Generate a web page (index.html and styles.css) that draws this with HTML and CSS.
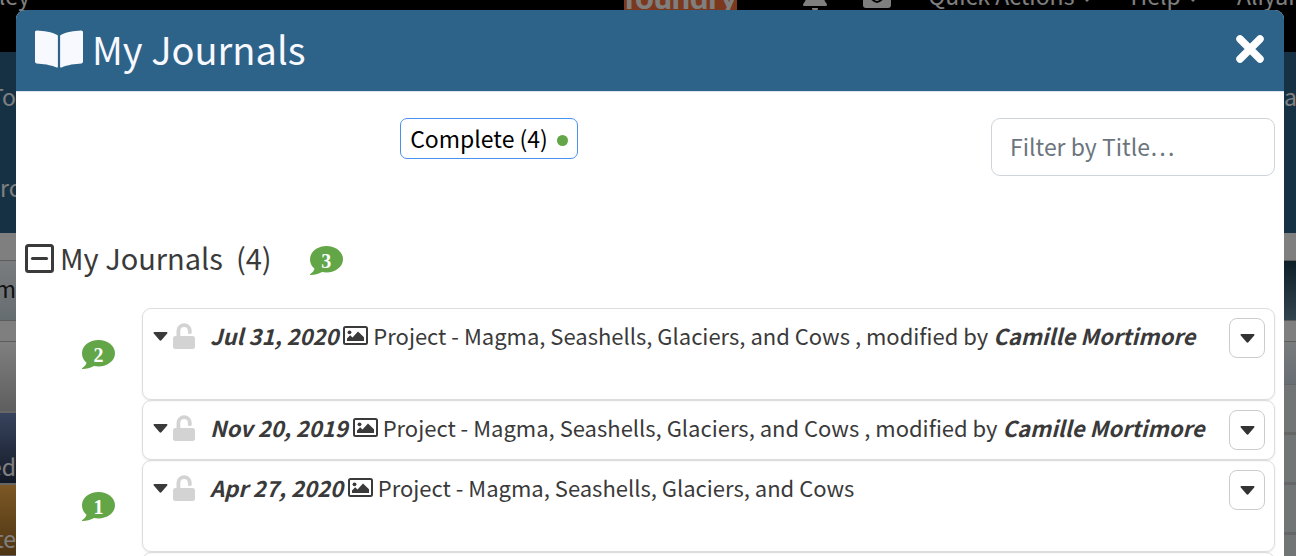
FILE: index.html
```html
<!DOCTYPE html>
<html lang="en">

<head>
  <meta charset="UTF-8">
  <meta name="viewport" content="width=device-width, initial-scale=1.0">
  <title>My Journals</title>
  <link rel="stylesheet" href="styles.css">
</head>

<body>
  <!-- icons -->
  <svg class="icon-defs" aria-hidden="true">
    <symbol id="icon-comment" viewBox="0 0 33 29">
      <path d="M16.500 0C25.600 0 33 5.800 33 13.200S25.600 26.400 16.500 26.400c-1.500 0-3-.2-4.400-.5C8.500 28 4.500 28.900.6 29c-.8 0-.9-.6-.3-1 2.500-1.600 3.700-3.300 4.200-5.300C1.600 20.300 0 17 0 13.200 0 5.800 7.400 0 16.500 0z" fill="#62a648" />
    </symbol>
    <symbol id="icon-lock" viewBox="0 0 22 26">
      <path d="M3.500 13V7.800a7.600 7.600 0 0 1 15.200 0v1.700a1.600 1.600 0 0 1-1.600 1.600h-.6a1.600 1.600 0 0 1-1.600-1.600V7.800a3.800 3.800 0 0 0-7.600 0V13h12.200A2.500 2.500 0 0 1 22 15.500v8a2.500 2.500 0 0 1-2.500 2.500h-17A2.500 2.500 0 0 1 0 23.500v-8A2.500 2.500 0 0 1 2.500 13z" fill="#d3d3d3" />
    </symbol>
    <symbol id="icon-caret" viewBox="0 0 14 9">
      <path d="M.9 0h12.200c.9 0 1.200.9.600 1.500L7.900 8.200c-.5.600-1.300.600-1.800 0L.3 1.500C-.3.900 0 0 .9 0z" fill="currentColor" />
    </symbol>
    <symbol id="icon-image" viewBox="0 0 25 19">
      <rect x="1" y="1" width="23" height="17" rx="1.500" fill="none" stroke="currentColor" stroke-width="2" />
      <circle cx="6.500" cy="6.300" r="1.900" fill="currentColor" />
      <path d="M4 15v-2.500l3.200-3.200 2.300 2.200 5.500-6 6 5.800V15z" fill="currentColor" />
    </symbol>
  </svg>

  <div class="page">
    <nav class="navbar">
      <span class="nav_user">ley</span>
      <span class="logo">foundry</span>
      <div class="nav_right">
        <svg class="nav_bell" viewBox="0 0 24 30">
          <path d="M12 0c1.300 0 2 .8 2 2 4 1 6 4 6 8 0 7 1.500 10 3.500 12.500.8 1 .5 2.500-1 2.500h-21c-1.500 0-1.800-1.500-1-2.500C2.500 20 4 17 4 10c0-4 2-7 6-8 0-1.200.7-2 2-2zM9 27h6a3 3 0 0 1-6 0z" fill="#fff" />
        </svg>
        <svg class="nav_mail" viewBox="0 0 28 24">
          <rect width="28" height="24" rx="3" fill="#fff" />
          <path d="M2 8c4 4 8 10 12 10s8-6 12-10" fill="none" stroke="#000" stroke-width="2" />
        </svg>
        <a href="#" class="nav_actions">Quick Actions <span class="nav_caret"></span></a>
        <a href="#" class="nav_help">Help <span class="nav_caret"></span></a>
        <a href="#" class="nav_name">Aliyar</a>
      </div>
    </nav>
    <div class="hero">
      <div class="gutter">
        <span class="end">To</span>
        <span>rce</span>
      </div>
      <div class="gutter">
        <span>ar</span>
      </div>
    </div>
    <div class="content">
      <div class="gutter">
        <div class="tab end">m</div>
        <div class="tile tile_gray"></div>
        <div class="tile tile_blue end">ed</div>
        <div class="tile tile_gold end">te</div>
      </div>
      <div class="gutter">
        <div class="tab tab_dark"></div>
        <div class="cell cell_head"></div>
        <div class="cell"></div>
        <div class="cell"></div>
        <div class="cell"></div>
        <div class="cell"></div>
      </div>
    </div>
  </div>

  <div class="backdrop">
    <div class="modal" role="dialog" aria-labelledby="modalTitle">
      <div class="modal_header">
        <svg class="book" viewBox="0 0 48 38">
          <path d="M2 .4C8.500.700 17 1.800 22.300 5c.4.200.6.600.6 1v30.700c0 .7-.8 1.100-1.400.8C15.700 34.600 7.500 33.800 1.600 33.400.700 33.300 0 32.700 0 31.800V2C0 1.100.8.300 2 .4zM46 .4C39.500.700 31 1.800 25.700 5c-.4.200-.6.600-.6 1v30.700c0 .7.800 1.100 1.400.8 5.800-2.900 14-3.700 19.900-4.100.9-.1 1.600-.7 1.600-1.600V2c0-.9-.8-1.700-2-1.600z" fill="#f8f8ff" />
        </svg>
        <h1 id="modalTitle">My Journals</h1>
        <button class="closeBtn" type="button" aria-label="Close">
          <svg viewBox="0 0 30 30">
            <path d="M5 5l20 20M25 5L5 25" stroke="#fff" stroke-width="7.500" stroke-linecap="round" />
          </svg>
        </button>
      </div>

      <div class="modal_body">
        <div class="toolbar">
          <button class="completeBtn" type="button">Complete (4) <span class="dot"></span></button>
          <input class="filter" type="text" placeholder="Filter by Title…" aria-label="Filter by Title">
        </div>

        <div class="group">
          <button class="toggleBtn" type="button" aria-label="Collapse">
            <svg viewBox="0 0 29 29">
              <rect x="1.500" y="1.500" width="26" height="26" rx="2" fill="none" stroke="#3a3a3a" stroke-width="3" />
              <path d="M7.500 14.500h14" stroke="#3a3a3a" stroke-width="3.200" stroke-linecap="round" />
            </svg>
          </button>
          <h2>My Journals&nbsp; (4)</h2>
          <span class="badge"><svg><use href="#icon-comment" /></svg><b>3</b></span>
        </div>

        <div class="journals">
          <div class="journal">
            <div class="journal_badge">
              <span class="badge"><svg><use href="#icon-comment" /></svg><b>2</b></span>
            </div>
            <div class="card card_tall">
              <svg class="caret"><use href="#icon-caret" /></svg>
              <svg class="lock"><use href="#icon-lock" /></svg>
              <p><em>Jul 31, 2020</em> <svg class="image"><use href="#icon-image" /></svg> Project - Magma, Seashells, Glaciers, and Cows , modified by <em>Camille Mortimore</em></p>
              <button class="menuBtn" type="button" aria-label="Options"><svg class="caret"><use href="#icon-caret" /></svg></button>
            </div>
          </div>
          <div class="journal">
            <div class="journal_badge"></div>
            <div class="card">
              <svg class="caret"><use href="#icon-caret" /></svg>
              <svg class="lock"><use href="#icon-lock" /></svg>
              <p><em>Nov 20, 2019</em> <svg class="image"><use href="#icon-image" /></svg> Project - Magma, Seashells, Glaciers, and Cows , modified by <em>Camille Mortimore</em></p>
              <button class="menuBtn" type="button" aria-label="Options"><svg class="caret"><use href="#icon-caret" /></svg></button>
            </div>
          </div>
          <div class="journal">
            <div class="journal_badge">
              <span class="badge"><svg><use href="#icon-comment" /></svg><b>1</b></span>
            </div>
            <div class="card card_tall">
              <svg class="caret"><use href="#icon-caret" /></svg>
              <svg class="lock"><use href="#icon-lock" /></svg>
              <p><em>Apr 27, 2020</em> <svg class="image"><use href="#icon-image" /></svg> Project - Magma, Seashells, Glaciers, and Cows</p>
              <button class="menuBtn" type="button" aria-label="Options"><svg class="caret"><use href="#icon-caret" /></svg></button>
            </div>
          </div>
          <div class="journal">
            <div class="journal_badge"></div>
            <div class="card"></div>
          </div>
        </div>
      </div>
    </div>
  </div>
</body>

</html>
```
FILE: styles.css
```css
* {
  box-sizing: border-box;
}

body {
  margin: 0;
  height: 100vh;
  overflow: hidden;
  font-family: "Noto Sans CJK SC", "Noto Sans", sans-serif;
  font-size: 23px;
  line-height: 34px;
  color: #3a3a3a;
  background-color: #fff;
}

button,
input {
  font: inherit;
  margin: 0;
}

h1,
h2,
p {
  margin: 0;
  font-weight: normal;
}

svg {
  display: block;
}

.icon-defs {
  display: none;
}

/* page behind the modal */
.page {
  height: calc(100vh + 40px);
  margin-top: -40px;
  overflow: hidden;
}

.navbar {
  display: flex;
  align-items: flex-start;
  height: 92px;
  padding-top: 18px;
  background-color: #000;
  color: #fff;
}

.navbar a {
  color: #fff;
  text-decoration: none;
  white-space: nowrap;
}

.nav_user {
  display: flex;
  justify-content: flex-end;
  width: 30px;
}

.logo {
  margin-left: 594px;
  width: 113px;
  height: 40px;
  background-color: #f8703a;
  font-family: Lato, sans-serif;
  font-size: 32px;
  font-weight: 900;
  line-height: 38px;
  text-align: center;
}

.nav_right {
  display: flex;
  margin-left: auto;
}

.nav_bell {
  width: 24px;
  height: 30px;
  margin-right: 36px;
  margin-top: 3px;
}

.nav_mail {
  width: 28px;
  height: 24px;
  margin-right: 37px;
  margin-top: 6px;
}

.nav_caret {
  display: inline-block;
  margin-left: 1px;
  vertical-align: 3px;
  border: 6px solid transparent;
  border-top-color: #fff;
  border-bottom: 0;
}

.nav_actions,
.nav_help {
  margin-right: 38px;
}

.nav_name {
  width: 59px;
  overflow: hidden;
}

.hero,
.content {
  display: flex;
  justify-content: space-between;
}

.hero {
  height: 181px;
  padding-top: 27px;
  background-color: #2d6388;
  color: #fff;
}

.gutter {
  width: 16px;
}

.hero .gutter:last-child,
.content .gutter:last-child {
  width: 12px;
}

.hero span {
  display: flex;
  margin-bottom: 57px;
}

.content {
  padding-top: 27px;
  background-color: #fff;
}

.gutter .end {
  display: flex;
  justify-content: flex-end;
}

.tab {
  height: 61px;
  padding-top: 10px;
  margin-bottom: 20px;
  border-top: 1px solid #bbb;
  border-bottom: 1px solid #bbb;
  background: linear-gradient(#f4f8fc, #ccdbe2);
  color: #222;
}

.tab_dark {
  background: linear-gradient(#1c3f50, #65889c);
}

.tile {
  height: 72px;
  padding-top: 36px;
  border-bottom: 2px solid #ccc;
  color: #fff;
}

.tile_gray {
  border-top: 1px solid #bbb;
  background: linear-gradient(#fff, #bdbdbd);
}

.tile_blue {
  background: linear-gradient(#7088bc, #27324c);
}

.tile_gold {
  background: linear-gradient(#f9b04a, #9c6a28);
}

.cell {
  height: 50px;
  border-bottom: 3px solid #ccc;
  background-color: #e2eaec;
}

.cell_head {
  height: 44px;
  border-top: 1px solid #bbb;
  border-bottom-width: 1px;
  background: linear-gradient(#f2f7fa, #d0dce6);
}

/* modal */
.backdrop {
  position: fixed;
  inset: 0;
  padding: 10px 12px 0 16px;
  overflow: hidden;
  background-color: rgba(0, 0, 0, 0.5);
}

.modal {
  min-height: 100%;
  border-radius: 9px 9px 0 0;
  overflow: hidden;
  background-color: #fff;
}

.modal_header {
  display: flex;
  align-items: center;
  height: 82px;
  padding: 0 19px 4px;
  border-bottom: 1px solid #dee2f0;
  background-color: #2d6388;
}

.book {
  width: 48px;
  height: 38px;
}

.modal_header h1 {
  margin-left: 9px;
  font-size: 38px;
  line-height: 56px;
  color: #f8f8ff;
}

.closeBtn,
.toggleBtn {
  padding: 0;
  border: 0;
  background: none;
}

.closeBtn {
  margin-left: auto;
}

.closeBtn svg {
  width: 30px;
  height: 30px;
}

.modal_body {
  padding: 26px 9px 0 0;
}

.toolbar {
  display: grid;
  grid-template-columns: 1fr 284px;
  gap: 29px;
  align-items: start;
}

.completeBtn {
  display: flex;
  align-items: center;
  justify-self: center;
  gap: 9px;
  height: 41px;
  padding: 0 9px 2px;
  border: 1px solid #4a90f0;
  border-radius: 7px;
  background-color: #fff;
  color: #000;
}

.dot {
  width: 11px;
  height: 11px;
  margin-top: 6px;
  border-radius: 50%;
  background-color: #62a648;
}

.filter {
  width: 100%;
  height: 58px;
  padding: 0 18px 3px;
  border: 1px solid #ced4da;
  border-radius: 9px;
}

.filter::placeholder {
  color: #6c757d;
  opacity: 1;
}

.group {
  display: flex;
  align-items: center;
  margin: 60px 0 28px 9px;
}

.toggleBtn svg {
  width: 29px;
  height: 29px;
}

.group h2 {
  margin: 0 38px 0 6px;
  padding-bottom: 2px;
  font-size: 29px;
  line-height: 42px;
}

.badge {
  display: grid;
  justify-items: center;
  width: 33px;
  height: 29px;
}

.group .badge {
  margin-top: 5px;
}

.badge svg,
.badge b {
  grid-area: 1 / 1;
}

.badge svg {
  width: 33px;
  height: 29px;
}

.badge b {
  z-index: 1;
  font-family: "Liberation Serif", serif;
  font-size: 20px;
  line-height: 30px;
  color: #fff;
}

/* journal list */
.journal {
  display: grid;
  grid-template-columns: 126px 1fr;
}

.journal_badge {
  display: flex;
  align-items: center;
  padding-left: 66px;
}

.card {
  display: flex;
  align-items: flex-start;
  min-height: 60px;
  padding: 9px;
  border: 1px solid #ddd;
  border-radius: 9px;
  box-shadow: 0 1px 2px rgba(0, 0, 0, 0.1);
}

.card_tall {
  min-height: 92px;
}

.caret {
  width: 15px;
  height: 9px;
}

.card > .caret {
  margin: 14px 5px 0 1px;
}

.lock {
  width: 22px;
  height: 26px;
  margin: 5px 15px 0 0;
}

.card p {
  flex: 1;
  font-size: 22px;
  white-space: nowrap;
}

.card em {
  font-weight: bold;
}

.image {
  display: inline-block;
  width: 25px;
  height: 19px;
}

.menuBtn {
  display: flex;
  justify-content: center;
  align-items: center;
  width: 36px;
  height: 40px;
  padding: 0;
  border: 1px solid #ccc;
  border-radius: 8px;
  background-color: #fff;
  color: #333;
}
```
